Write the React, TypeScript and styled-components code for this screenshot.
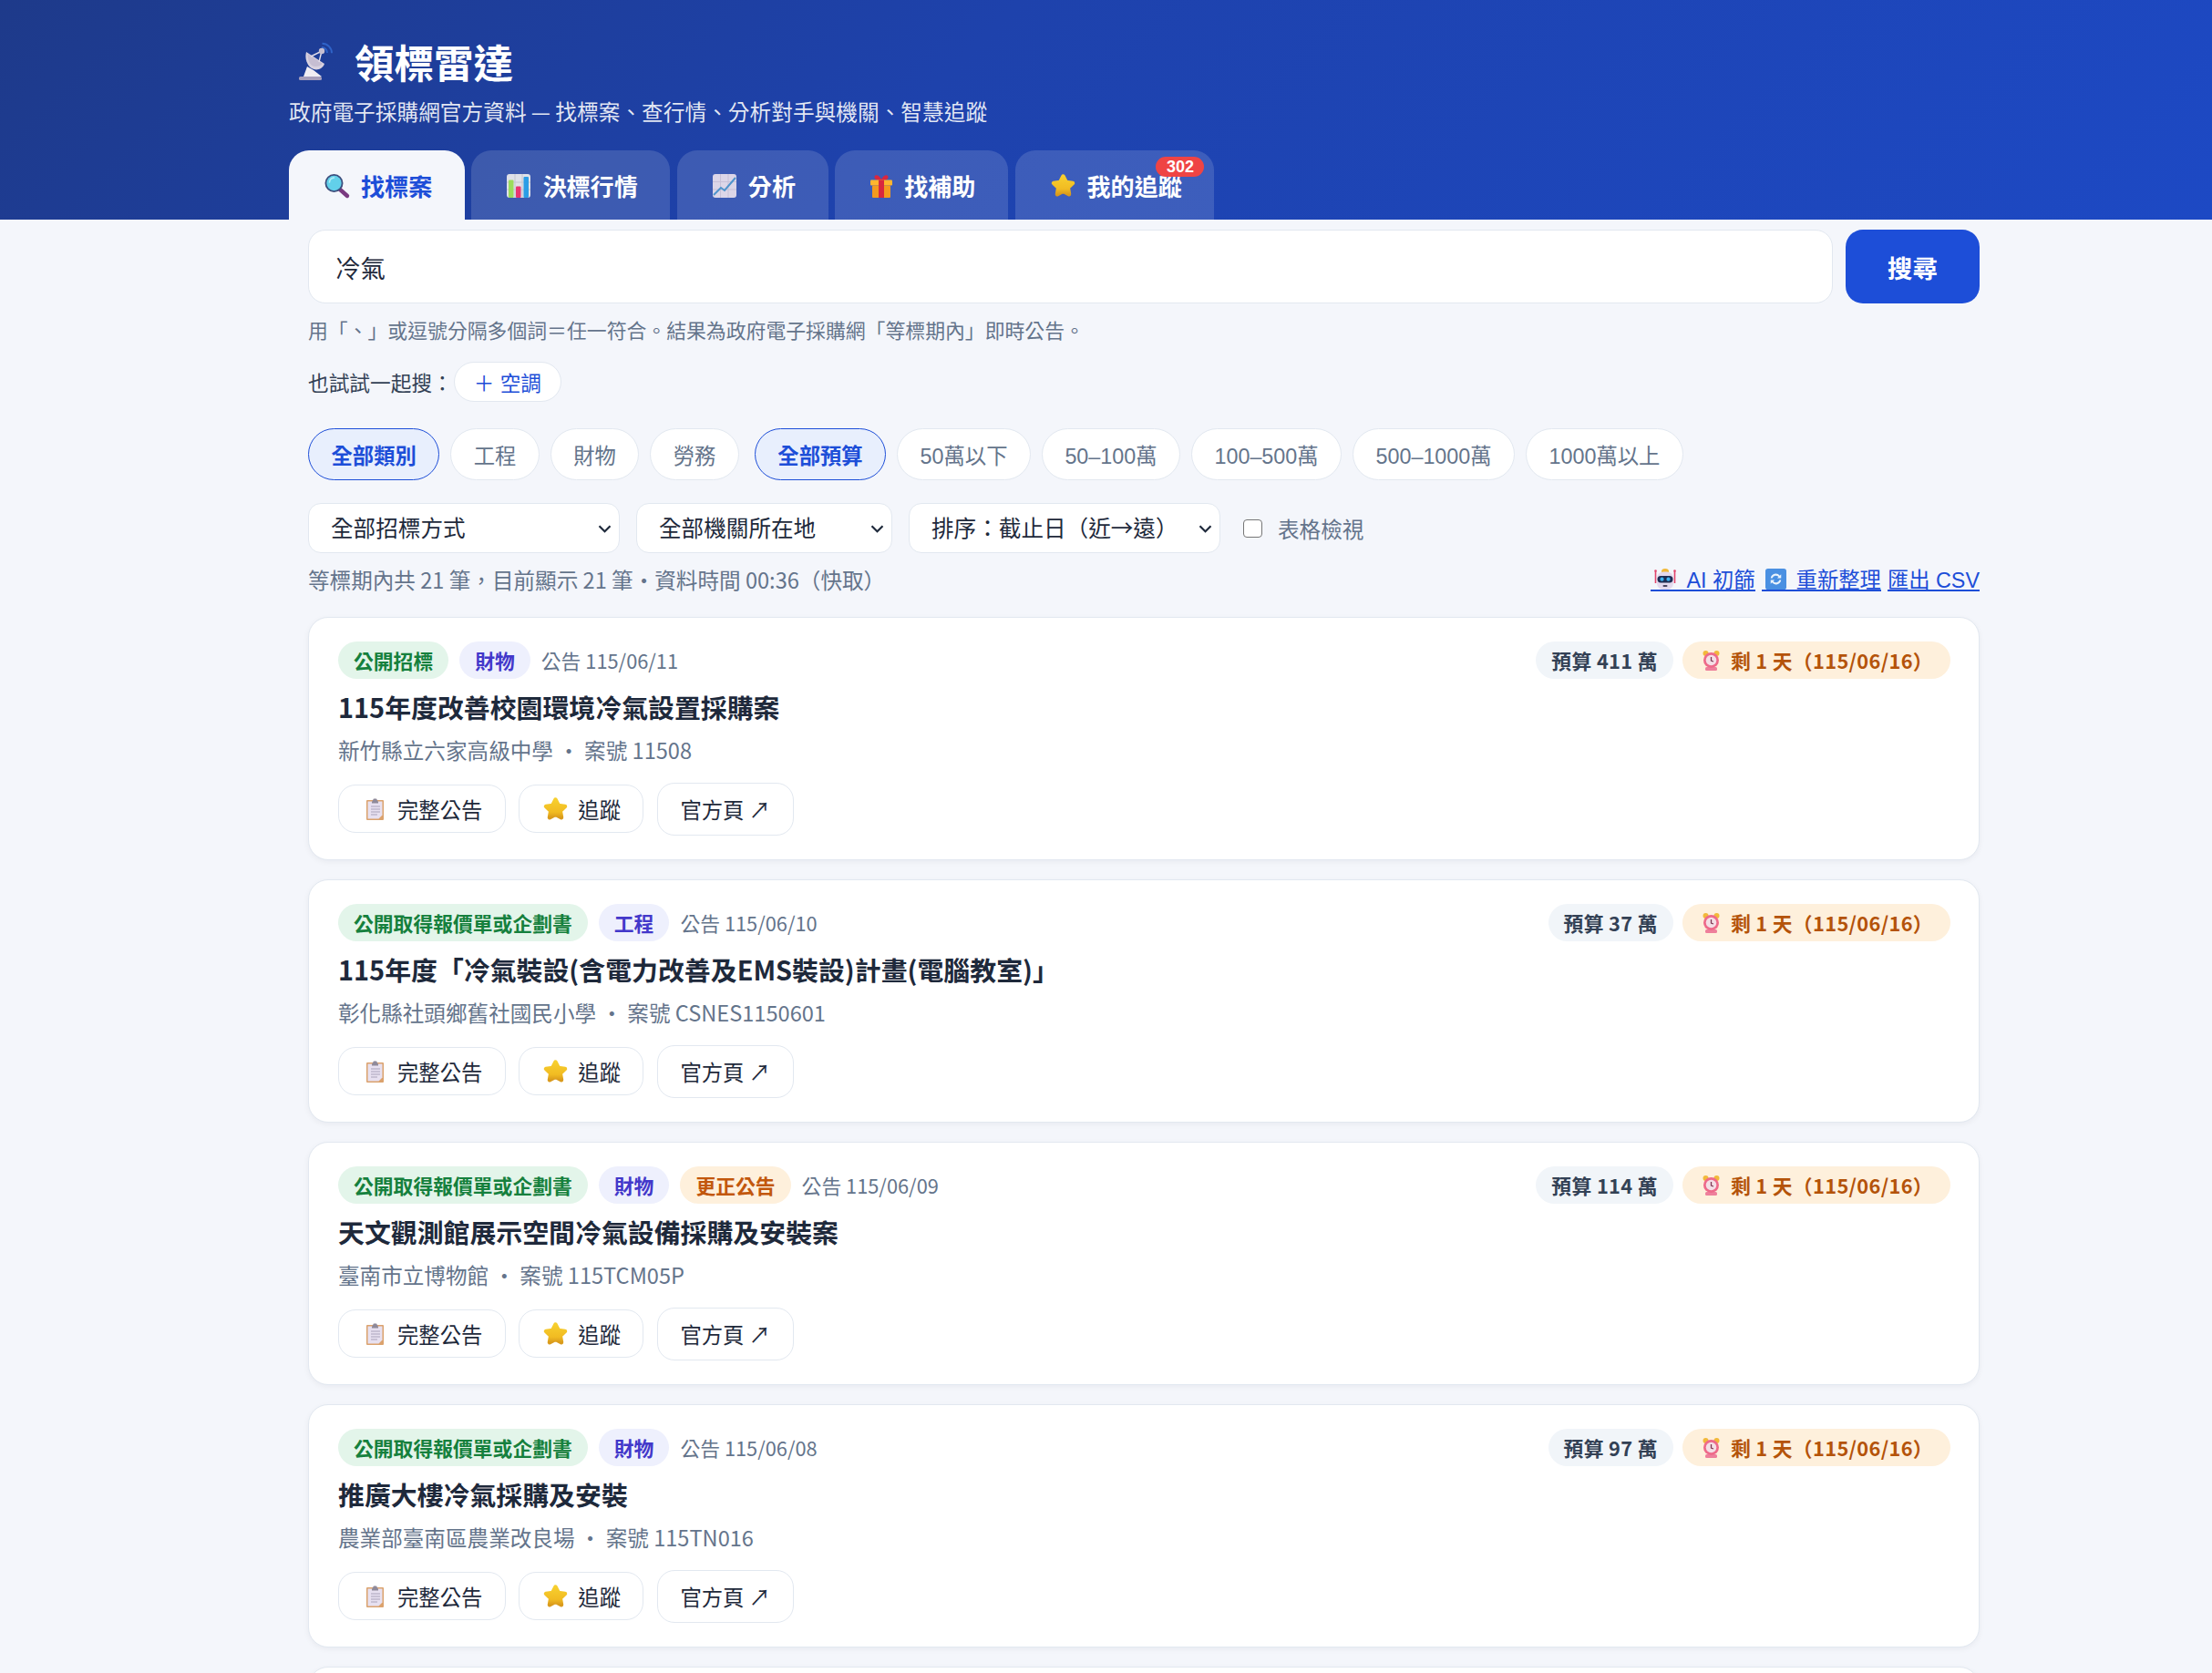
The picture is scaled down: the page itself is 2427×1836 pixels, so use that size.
import React from "react";
import styled, { createGlobalStyle } from "styled-components";

const GlobalStyle = createGlobalStyle`
  html, body {
    margin: 0;
    padding: 0;
    height: 1836px;
    overflow: hidden;
    background: #f4f6fb;
    font-family: "Noto Sans CJK TC", "Noto Sans", sans-serif;
    color: #1e293b;
  }
  * { box-sizing: border-box; }
`;

const UI_FONT = `"Liberation Sans", "Noto Sans CJK TC", sans-serif`;

const Header = styled.header`
  height: 241px;
  padding: 42px 0 0 317px;
  background: linear-gradient(135deg, #1e3a8a 0%, #1e42ac 42%, #1d49c4 100%);
  color: #fff;
`;

const Title = styled.h1`
  display: flex;
  align-items: center;
  gap: 24px;
  height: 52px;
  margin: 0;
  padding-left: 11px;
  font-size: 43.5px;
  font-weight: 700;
  line-height: 52px;
`;

const Sub = styled.p`
  margin: 11px 0 0;
  font-size: 23.7px;
  line-height: 34px;
  color: rgba(255, 255, 255, 0.88);
`;

const Tabs = styled.nav`
  display: flex;
  gap: 7.5px;
  margin-top: 26px;
`;

const Tab = styled.button<{ $active?: boolean }>`
  position: relative;
  display: flex;
  align-items: center;
  gap: 13px;
  height: 76px;
  padding: 1px 35.6px 0 39px;
  border: none;
  border-radius: 22px 22px 0 0;
  font-family: ${UI_FONT};
  font-size: 26.1px;
  font-weight: 700;
  color: ${(p) => (p.$active ? "#1d4ed8" : "#fff")};
  background: ${(p) => (p.$active ? "#f4f6fb" : "rgba(255, 255, 255, 0.14)")};
`;

const Badge = styled.span`
  position: absolute;
  top: 7px;
  right: 11px;
  width: 53px;
  height: 22px;
  border-radius: 11px;
  background: #ef4444;
  color: #fff;
  font-size: 18px;
  line-height: 22px;
  text-align: center;
`;

const Main = styled.main`
  width: 1834px;
  margin-left: 338px;
`;

const SearchRow = styled.div`
  display: flex;
  gap: 14px;
  margin-top: 11px;
`;

const SearchInput = styled.input`
  flex: 1;
  height: 81px;
  padding: 0 29px;
  border: 1.5px solid #e2e8f0;
  border-radius: 19px;
  background: #fff;
  outline: none;
  font-family: inherit;
  font-size: 27.4px;
  color: #1e293b;
`;

const SearchButton = styled.button`
  width: 147px;
  height: 81px;
  border: none;
  border-radius: 19px;
  background: #1d4ed8;
  color: #fff;
  font-family: ${UI_FONT};
  font-size: 27.4px;
  font-weight: 700;
`;

const Hint = styled.p`
  margin: 11.5px 0 0;
  font-size: 21.85px;
  line-height: 34px;
  color: #64748b;
`;

const TryRow = styled.div`
  display: flex;
  align-items: center;
  gap: 1px;
  height: 44px;
  margin-top: 18.5px;
  font-size: 22.7px;
  color: #334155;
`;

const TryChip = styled.button`
  height: 44px;
  padding: 0 21px;
  border: 1.5px solid #e2e8f0;
  border-radius: 22px;
  background: #fff;
  font-family: ${UI_FONT};
  font-size: 22.6px;
  color: #1d4ed8;
`;

const ChipRow = styled.div`
  display: flex;
  gap: 11.9px;
  margin-top: 29px;
`;

const Chip = styled.button<{ $active?: boolean; $groupStart?: boolean }>`
  height: 57px;
  margin-left: ${(p) => (p.$groupStart ? "5px" : "0")};
  padding: 0 24.5px;
  border: 1.5px solid ${(p) => (p.$active ? "#1d4ed8" : "#e2e8f0")};
  border-radius: 29px;
  background: ${(p) => (p.$active ? "#e8effd" : "#fff")};
  color: ${(p) => (p.$active ? "#1d4ed8" : "#64748b")};
  font-family: ${UI_FONT};
  font-size: 23.33px;
  font-weight: ${(p) => (p.$active ? 700 : 400)};
`;

const FilterRow = styled.div`
  display: flex;
  align-items: center;
  gap: 18px;
  height: 55px;
  margin-top: 25px;
`;

const SelectBox = styled.div<{ $width: number }>`
  position: relative;
  width: ${(p) => p.$width}px;
  height: 55px;
`;

const Select = styled.select`
  width: 100%;
  height: 100%;
  padding: 0 30px 3px 24px;
  border: 1.5px solid #e2e8f0;
  border-radius: 14px;
  background-color: #fff;
  appearance: none;
  font-family: "Noto Sans CJK TC", sans-serif;
  font-size: 24.6px;
  color: #1e293b;
`;

const Chevron = styled.svg`
  position: absolute;
  top: 24px;
  right: 9px;
  pointer-events: none;
`;

const TableToggle = styled.label`
  display: flex;
  align-items: center;
  gap: 17px;
  margin-left: 7px;
  font-size: 23.6px;
  color: #64748b;
`;

const Check = styled.input`
  width: 21px;
  height: 20px;
  margin: 0;
  border: 1.8px solid #767676;
  border-radius: 4px;
  background: #fff;
  appearance: none;
`;

const StatusRow = styled.div`
  display: flex;
  align-items: center;
  justify-content: space-between;
  height: 36px;
  margin-top: 10.5px;
  font-size: 23.6px;
  color: #64748b;
`;

const ToolLinks = styled.div`
  display: flex;
  gap: 7px;
  margin-bottom: 3px;
`;

const ToolLink = styled.a<{ $bare?: boolean }>`
  display: inline-flex;
  align-items: flex-end;
  gap: 11px;
  height: 30px;
  padding-left: ${(p) => (p.$bare ? 0 : 4)}px;
  border-bottom: 2px solid #1d4ed8;
  font-family: ${UI_FONT};
  font-size: 23.33px;
  line-height: 20px;
  color: #1d4ed8;
`;

const CardList = styled.div`
  display: flex;
  flex-direction: column;
  gap: 21px;
  margin-top: 23px;
`;

const Card = styled.article`
  height: 267px;
  padding: 26px 31px 26px 32px;
  border: 1.5px solid #e2e8f0;
  border-radius: 22px;
  background: #fff;
  box-shadow: 0 2px 6px rgba(15, 23, 42, 0.05);
`;

const CardTop = styled.div`
  display: flex;
  align-items: center;
  justify-content: space-between;
`;

const Tags = styled.div`
  display: flex;
  align-items: center;
  gap: 12px;
`;

const Pills = styled.div`
  display: flex;
  align-items: center;
  gap: 10px;
`;

type Tone = "green" | "indigo" | "orange";

const toneColors: Record<Tone, [string, string]> = {
  green: ["#e3f5ea", "#15803d"],
  indigo: ["#eef0fd", "#4338ca"],
  orange: ["#fef0dc", "#c2570c"],
};

const Tag = styled.span<{ $tone: Tone }>`
  display: inline-flex;
  align-items: center;
  height: 41px;
  padding: 0 17px;
  border-radius: 21px;
  background: ${(p) => toneColors[p.$tone][0]};
  color: ${(p) => toneColors[p.$tone][1]};
  font-size: 21.8px;
  font-weight: 700;
`;

const DateText = styled.span`
  font-size: 21.8px;
  color: #64748b;
`;

const Budget = styled.span`
  display: inline-flex;
  align-items: center;
  height: 41px;
  padding: 0 17px;
  border-radius: 21px;
  background: #f1f5f9;
  color: #334155;
  font-size: 21.8px;
  font-weight: 700;
  letter-spacing: 0.33px;
`;

const Deadline = styled.span`
  display: inline-flex;
  align-items: center;
  gap: 12px;
  height: 41px;
  padding: 0 19px 0 22px;
  border-radius: 21px;
  background: #fef0dc;
  color: #b45309;
  font-size: 21.8px;
  font-weight: 700;
  letter-spacing: 0.33px;
`;

const CardTitle = styled.h3`
  margin: 10.5px 0 0;
  font-size: 28.9px;
  font-weight: 700;
  line-height: 40px;
  color: #1e293b;
`;

const Meta = styled.p`
  margin: 9.5px 0 0;
  font-size: 23.6px;
  line-height: 36px;
  color: #64748b;
`;

const Actions = styled.div`
  display: flex;
  align-items: center;
  gap: 14.5px;
  margin-top: 18px;
`;

const ActionButton = styled.button`
  display: inline-flex;
  align-items: center;
  gap: 13px;
  height: 53px;
  padding: 0 24.5px 0 28px;
  border: 1.5px solid #e2e8f0;
  border-radius: 19px;
  background: #fff;
  font-family: ${UI_FONT};
  font-size: 23.33px;
  color: #1e293b;
`;

const ActionLink = styled.a`
  display: inline-flex;
  align-items: center;
  height: 58px;
  padding: 0 24.5px;
  border: 1.5px solid #e2e8f0;
  border-radius: 19px;
  background: #fff;
  font-size: 23.33px;
  color: #1e293b;
`;

const Icon = styled.svg`
  flex: none;
  display: block;
  overflow: visible;
`;

const ClockSvg = styled(Icon)`
  margin-top: 2px;
`;

const ChevronIcon = () => (
  <Chevron width="15" height="9" viewBox="0 0 15 9">
    <path d="M1.5 1.2 L7.5 7.2 L13.5 1.2" fill="none" stroke="#1e293b" strokeWidth="2.2" />
  </Chevron>
);

const DishIcon = () => (
  <Icon width="37" height="42" viewBox="0 0 37 42">
    <path d="M25 5a6 6 0 0 1 6 6M25.500 0.800a10.500 10.500 0 0 1 10.500 10.500" fill="none" stroke="#2f63c8" strokeWidth="2" />
    <path d="M5 37 L9 26 L16 30 L25 37Z" fill="#f0edf3" />
    <path d="M8 10 L28 23 C26 29 19 31 14 28 C9 25 6 17 8 10Z" fill="#d8d2e0" />
    <path d="M9.500 12 L26 23 C23 26 18 27 14.500 25 C11 23 9.500 17 9.500 12Z" fill="#c6bed2" />
    <path d="M13 15 L25 9 L22 21" stroke="#e4dfea" strokeWidth="1.400" fill="none" />
    <circle cx="25" cy="9" r="3.200" fill="#c6bfd1" />
    <rect x="0" y="37" width="25" height="4" rx="1.500" fill="#a69ebb" />
  </Icon>
);

const SearchIcon = () => (
  <Icon width="27" height="26" viewBox="0 0 27 26">
    <path d="M16 16 L25 24" stroke="#7a3a80" strokeWidth="4.400" strokeLinecap="round" />
    <circle cx="10.500" cy="10" r="10" fill="#3c4d7c" />
    <circle cx="10.500" cy="10" r="8.200" fill="#62d0ea" />
    <path d="M5.500 9a5.500 5.500 0 0 1 5-5" stroke="#b4ecf6" strokeWidth="1.600" fill="none" strokeLinecap="round" />
  </Icon>
);

const BarsIcon = () => (
  <Icon width="26" height="26" viewBox="0 0 26 26">
    <rect width="26" height="26" rx="3" fill="#dfe1e8" />
    <path d="M9 0v26M17 0v26M0 9h26M0 17h26" stroke="#c4c6d0" strokeWidth="1" />
    <rect x="2" y="6.500" width="5.500" height="19.500" rx="1" fill="#9bdc5c" />
    <rect x="10" y="13.500" width="5.500" height="12.500" rx="1" fill="#ea3570" />
    <rect x="18.500" y="3" width="5.500" height="23" rx="1" fill="#2b9de6" />
  </Icon>
);

const LineIcon = () => (
  <Icon width="26" height="26" viewBox="0 0 26 26">
    <rect width="26" height="26" rx="3" fill="#dcd6e8" />
    <path d="M8.500 0v26M17 0v26M0 8.500h26M0 17h26" stroke="#c8c1d8" strokeWidth="1" />
    <path d="M1 23 L9 15 L13 18 L25 4" fill="none" stroke="#4f94cc" strokeWidth="2" />
  </Icon>
);

const GiftIcon = () => (
  <Icon width="24" height="26" viewBox="0 0 24 26">
    <path d="M12 6C10 1 5 0 4.500 3S8 7 12 7C16 7 20 6 19.500 3S14 1 12 6Z" fill="#d9263f" />
    <rect x="0" y="6.500" width="24" height="6" rx="1" fill="#ffb52e" />
    <rect x="2" y="12.500" width="20" height="13.500" rx="1" fill="#f39a1f" />
    <rect x="9" y="6.500" width="6" height="19.500" fill="#d8283f" />
  </Icon>
);

const StarIcon = ({ size = 27, tight }: { size?: number; tight?: boolean }) => (
  <Icon width={size} height={size} viewBox={tight ? "2 2 23 23" : "0 0 27 27"}>
    <defs>
      <linearGradient id="starFill" x1="0" y1="0" x2="0" y2="1">
        <stop offset="0" stopColor="#f7cf2e" />
        <stop offset="0.7" stopColor="#f1bb22" />
        <stop offset="1" stopColor="#d99a1c" />
      </linearGradient>
    </defs>
    <path
      d="M13.500 3.500 L16.800 10 L24 11 L18.800 16 L20 23.200 L13.500 19.800 L7 23.200 L8.200 16 L3 11 L10.200 10Z"
      fill="url(#starFill)"
      stroke="url(#starFill)"
      strokeWidth="4.500"
      strokeLinejoin="round"
    />
  </Icon>
);

const ClipboardIcon = () => (
  <Icon width="23" height="24" viewBox="-2 0 23 24">
    <path d="M1 2h17a1 1 0 0 1 1 1v20a1 1 0 0 1-1 1H1a1 1 0 0 1-1-1V3a1 1 0 0 1 1-1Z" fill="#dba26d" />
    <path d="M1.500 3.500h16v15l-4 4h-12Z" fill="#e7e0f0" />
    <path d="M5 9h10M5 12h10M5 15h10M5 18h7" stroke="#a9a2ba" strokeWidth="1.200" />
    <path d="M6 4l2-3.500h3L13 4v1.500H6Z" fill="#8f8a9a" />
  </Icon>
);

const ClockIcon = () => (
  <ClockSvg width="19" height="24" viewBox="0 0 19 24">
    <circle cx="3.500" cy="4" r="3" fill="#f2b93a" />
    <circle cx="15.500" cy="4" r="3" fill="#f2b93a" />
    <rect x="3" y="19" width="13" height="4" rx="1.500" fill="#ee7f9b" />
    <circle cx="9.500" cy="11.500" r="8.500" fill="#ee6a8a" />
    <circle cx="9.500" cy="11.500" r="5.800" fill="#f4dfe6" />
    <path d="M9.500 8v4l2.500 1" stroke="#7f3a55" strokeWidth="1.300" fill="none" />
  </ClockSvg>
);

const RobotIcon = () => (
  <Icon width="24" height="23" viewBox="0 0 24 23">
    <path d="M1.500 3v13M22.500 3v13" stroke="#e2446c" strokeWidth="1.600" />
    <circle cx="1.500" cy="2.500" r="1.300" fill="#e2446c" />
    <circle cx="22.500" cy="2.500" r="1.300" fill="#e2446c" />
    <path d="M8 3a4 3 0 0 1 8 0v1H8Z" fill="#f2b93a" />
    <rect x="3" y="3.500" width="18" height="19.500" rx="7" fill="#e4d9ee" />
    <rect x="3.500" y="8" width="17" height="7.500" rx="3.700" fill="#1e2c52" />
    <circle cx="8.500" cy="11.700" r="2.100" fill="#3fb2f2" />
    <circle cx="15.500" cy="11.700" r="2.100" fill="#3fb2f2" />
    <rect x="9.500" y="18" width="5" height="2" rx="1" fill="#4a4560" />
  </Icon>
);

const RefreshIcon = () => (
  <Icon width="23" height="23" viewBox="0 0 24 24">
    <rect width="24" height="24" rx="3" fill="#4a90e2" />
    <path d="M6 11a6 6 0 0 1 10.500-3l1.500-1.500V11h-4.500l1.500-1.500A4 4 0 0 0 8 11Z" fill="#eaf3fc" />
    <path d="M18 13a6 6 0 0 1-10.500 3L6 17.500V13h4.500L9 14.500A4 4 0 0 0 16 13Z" fill="#eaf3fc" />
  </Icon>
);

const tenders = [
  {
    method: "公開招標",
    kind: "財物",
    date: "115/06/11",
    title: "115年度改善校園環境冷氣設置採購案",
    agency: "新竹縣立六家高級中學",
    no: "11508",
    budget: "411",
  },
  {
    method: "公開取得報價單或企劃書",
    kind: "工程",
    date: "115/06/10",
    title: "115年度「冷氣裝設(含電力改善及EMS裝設)計畫(電腦教室)」",
    agency: "彰化縣社頭鄉舊社國民小學",
    no: "CSNES1150601",
    budget: "37",
  },
  {
    method: "公開取得報價單或企劃書",
    kind: "財物",
    corrected: true,
    date: "115/06/09",
    title: "天文觀測館展示空間冷氣設備採購及安裝案",
    agency: "臺南市立博物館",
    no: "115TCM05P",
    budget: "114",
  },
  {
    method: "公開取得報價單或企劃書",
    kind: "財物",
    date: "115/06/08",
    title: "推廣大樓冷氣採購及安裝",
    agency: "農業部臺南區農業改良場",
    no: "115TN016",
    budget: "97",
  },
];

const App: React.FC = () => {
  return (
    <>
      <GlobalStyle />
      <Header>
        <Title>
          <DishIcon />
          領標雷達
        </Title>
        <Sub>政府電子採購網官方資料 — 找標案、查行情、分析對手與機關、智慧追蹤</Sub>
        <Tabs>
          <Tab $active>
            <SearchIcon />
            找標案
          </Tab>
          <Tab>
            <BarsIcon />
            決標行情
          </Tab>
          <Tab>
            <LineIcon />
            分析
          </Tab>
          <Tab>
            <GiftIcon />
            找補助
          </Tab>
          <Tab>
            <StarIcon />
            我的追蹤
            <Badge>302</Badge>
          </Tab>
        </Tabs>
      </Header>
      <Main>
        <SearchRow>
          <SearchInput defaultValue="冷氣" />
          <SearchButton>搜尋</SearchButton>
        </SearchRow>
        <Hint>用「、」或逗號分隔多個詞＝任一符合。結果為政府電子採購網「等標期內」即時公告。</Hint>
        <TryRow>
          也試試一起搜：
          <TryChip>＋ 空調</TryChip>
        </TryRow>
        <ChipRow>
          <Chip $active>全部類別</Chip>
          <Chip>工程</Chip>
          <Chip>財物</Chip>
          <Chip>勞務</Chip>
          <Chip $active $groupStart>
            全部預算
          </Chip>
          <Chip>50萬以下</Chip>
          <Chip>50–100萬</Chip>
          <Chip>100–500萬</Chip>
          <Chip>500–1000萬</Chip>
          <Chip>1000萬以上</Chip>
        </ChipRow>
        <FilterRow>
          <SelectBox $width={342}>
            <Select>
              <option>全部招標方式</option>
            </Select>
            <ChevronIcon />
          </SelectBox>
          <SelectBox $width={281}>
            <Select>
              <option>全部機關所在地</option>
            </Select>
            <ChevronIcon />
          </SelectBox>
          <SelectBox $width={342}>
            <Select>
              <option>排序：截止日（近→遠）</option>
            </Select>
            <ChevronIcon />
          </SelectBox>
          <TableToggle>
            <Check type="checkbox" />
            表格檢視
          </TableToggle>
        </FilterRow>
        <StatusRow>
          <span>等標期內共 21 筆，目前顯示 21 筆・資料時間 00:36（快取）</span>
          <ToolLinks>
            <ToolLink>
              <RobotIcon />
              AI 初篩
            </ToolLink>
            <ToolLink>
              <RefreshIcon />
              重新整理
            </ToolLink>
            <ToolLink $bare>匯出 CSV</ToolLink>
          </ToolLinks>
        </StatusRow>
        <CardList>
          {tenders.map((t) => (
            <Card key={t.no}>
              <CardTop>
                <Tags>
                  <Tag $tone="green">{t.method}</Tag>
                  <Tag $tone="indigo">{t.kind}</Tag>
                  {t.corrected && <Tag $tone="orange">更正公告</Tag>}
                  <DateText>公告 {t.date}</DateText>
                </Tags>
                <Pills>
                  <Budget>預算 {t.budget} 萬</Budget>
                  <Deadline>
                    <ClockIcon />
                    剩 1 天（115/06/16）
                  </Deadline>
                </Pills>
              </CardTop>
              <CardTitle>{t.title}</CardTitle>
              <Meta>
                {t.agency} ・ 案號 {t.no}
              </Meta>
              <Actions>
                <ActionButton>
                  <ClipboardIcon />
                  完整公告
                </ActionButton>
                <ActionButton>
                  <StarIcon size={23} tight />
                  追蹤
                </ActionButton>
                <ActionLink>官方頁 ↗</ActionLink>
              </Actions>
            </Card>
          ))}
          <Card />
        </CardList>
      </Main>
    </>
  );
};

export default App;
